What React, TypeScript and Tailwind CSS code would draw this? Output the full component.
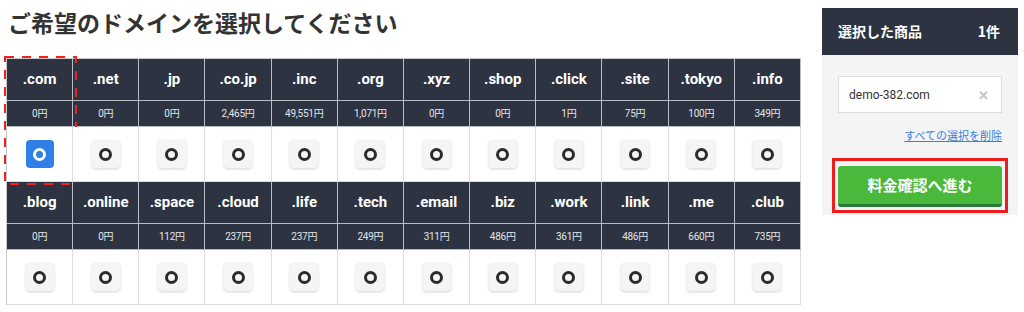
import React from "react";

type Tld = { name: string; price: string };

const rows: Tld[][] = [
  [
    { name: ".com", price: "0円" },
    { name: ".net", price: "0円" },
    { name: ".jp", price: "0円" },
    { name: ".co.jp", price: "2,465円" },
    { name: ".inc", price: "49,551円" },
    { name: ".org", price: "1,071円" },
    { name: ".xyz", price: "0円" },
    { name: ".shop", price: "0円" },
    { name: ".click", price: "1円" },
    { name: ".site", price: "75円" },
    { name: ".tokyo", price: "100円" },
    { name: ".info", price: "349円" },
  ],
  [
    { name: ".blog", price: "0円" },
    { name: ".online", price: "0円" },
    { name: ".space", price: "112円" },
    { name: ".cloud", price: "237円" },
    { name: ".life", price: "237円" },
    { name: ".tech", price: "249円" },
    { name: ".email", price: "311円" },
    { name: ".biz", price: "486円" },
    { name: ".work", price: "361円" },
    { name: ".link", price: "486円" },
    { name: ".me", price: "660円" },
    { name: ".club", price: "735円" },
  ],
];

const font = { fontFamily: '"Roboto", "Noto Sans CJK JP", sans-serif' };

function PickButton({ selected }: { selected: boolean }) {
  return (
    <button
      className={
        selected
          ? "w-[28px] h-[28px] rounded-[4px] bg-[#2f7fe6] flex items-center justify-center"
          : "w-[28px] h-[28px] rounded-[4px] bg-[#f5f5f5] shadow-[0_1px_3px_rgba(0,0,0,0.18)] flex items-center justify-center"
      }
    >
      <span
        className={
          selected
            ? "block w-[13px] h-[13px] rounded-full border-[3px] border-white"
            : "block w-[13px] h-[13px] rounded-full border-[3px] border-[#2b2b2b]"
        }
      />
    </button>
  );
}

function Block({ items, first }: { items: Tld[]; first: boolean }) {
  return (
    <div className="grid grid-cols-12 border-l border-[#c9c9c9]">
      {items.map((t) => (
        <div key={t.name + "h"} className="h-[42px] bg-[#2d3340] border-r border-b border-[#b8bcc4] flex items-center justify-center text-white font-bold text-[15px]">
          {t.name}
        </div>
      ))}
      {items.map((t) => (
        <div key={t.name + "p"} className="h-[26px] bg-[#2d3340] border-r border-b border-[#b8bcc4] flex items-center justify-center text-[#e4e6ea] text-[10px] tracking-tight">
          {t.price}
        </div>
      ))}
      {items.map((t, i) => (
        <div key={t.name + "b"} className="relative h-[55px] bg-white border-r border-b border-[#dcdcdc] flex items-center justify-center">
          <PickButton selected={first && i === 0} />
          {/* 選択中カラムの点線枠 */}
          {first && i === 0 && (
            <svg className="absolute left-[-3px] top-[-71px] pointer-events-none" width="73" height="129" viewBox="0 0 73 129">
              <rect x="1" y="1" width="71" height="127" fill="none" stroke="#ee2222" strokeWidth="2" strokeDasharray="9 8" />
            </svg>
          )}
        </div>
      ))}
    </div>
  );
}

export default function App() {
  return (
    <div className="w-[1024px] h-[312px] bg-white flex" style={font}>
      <div className="ml-[6px] w-[795px]">
        <h1 className="mt-[5px] ml-[2px] h-[34px] leading-[34px] text-[23px] font-bold text-[#333333]" style={{ fontFamily: '"Noto Sans CJK JP", sans-serif' }}>
          ご希望のドメインを選択してください
        </h1>
        <div className="mt-[19px] border-t border-[#c9c9c9]">
          <Block items={rows[0]} first={true} />
          <Block items={rows[1]} first={false} />
        </div>
      </div>

      <div className="ml-[21px] mt-[8px] w-[196px] h-[207px] bg-[#f4f4f4] flex flex-col" style={{ fontFamily: '"Noto Sans CJK JP", sans-serif' }}>
        <div className="h-[47px] bg-[#2d3340] flex items-center justify-between pl-[16px] pr-[18px] text-white font-bold text-[14px]">
          <span>選択した商品</span>
          <span>1件</span>
        </div>
        <div className="mx-[16px] mt-[21px] h-[37px] bg-white border border-[#dddddd] flex items-center justify-between pl-[10px] pr-[12px]">
          <span className="text-[12px] text-[#333333]" style={font}>demo-382.com</span>
          <span className="text-[13px] text-[#c4c4c4] font-bold">✕</span>
        </div>
        <div className="mx-[16px] mt-[8px] text-right">
          <a href="#" className="text-[11px] text-[#3b7fd9] underline">すべての選択を削除</a>
        </div>
        <div className="mx-[10px] mt-[13px] border-[3px] border-[#ee1c1c] pt-[5px] pb-[3px] px-[3px]">
          <button className="w-full h-[41px] rounded-[3px] bg-[#4ab83a] border-b-[3px] border-[#2c7a3a] text-white font-bold text-[15px]">
            料金確認へ進む
          </button>
        </div>
      </div>
    </div>
  );
}
